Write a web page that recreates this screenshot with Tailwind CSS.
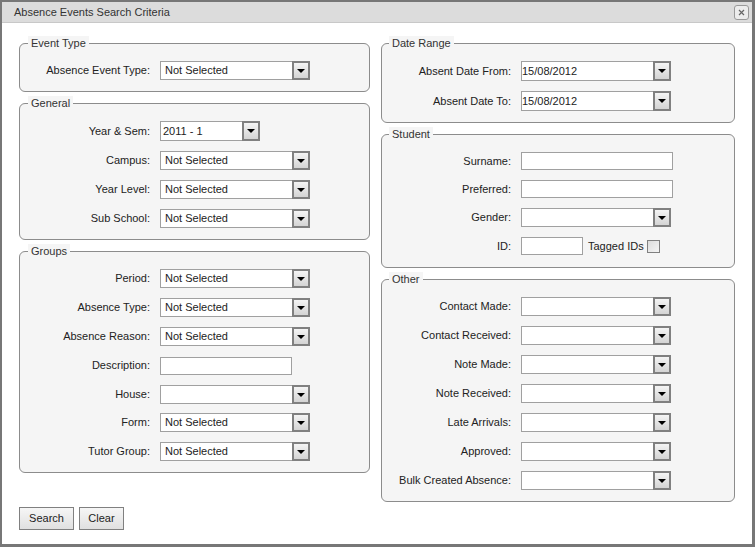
<!DOCTYPE html>
<html lang="en">
<head>
    <meta charset="UTF-8">
    <title>Absence Events Search Criteria</title>
    <script src="https://cdn.jsdelivr.net/npm/@tailwindcss/browser@4"></script>
</head>
<body class="m-0 bg-white font-['Liberation_Sans',Arial,sans-serif] text-[11px] text-[#222]">
    <div class="w-[755px] h-[547px] overflow-hidden bg-white border-l-2 border-r-[3px] border-t-2 border-b-[3px] border-[#777] flex flex-col">
        <!-- Title bar -->
        <div class="h-[21px] shrink-0 bg-[#dcdcdc] border-b border-[#c8c8c8] flex items-center justify-between pl-[12px] pr-[3px]">
            <span class="text-[#333]">Absence Events Search Criteria</span>
            <button class="w-[15px] h-[15px] rounded-[3px] border border-[#999] bg-[#ececec] flex items-center justify-center">
                <svg width="7" height="7" viewBox="0 0 7 7"><path d="M1 1L6 6M6 1L1 6" stroke="#666" stroke-width="1.2" fill="none"/></svg>
            </button>
        </div>

        <div class="flex-1 flex gap-[11px] pl-[17px] pt-[13px]">
            <!-- Left column -->
            <div class="w-[351px] flex flex-col gap-[4px]">
                <fieldset class="h-[56px] border border-[#8c8c8c] rounded-[6px] bg-[#f5f5f5] pl-[8px] pt-[11px]">
                    <legend class="px-[3px] bg-[#f5f5f5] text-[#333] leading-[14px]">Event Type</legend>
                    <div class="flex items-center h-[19px]">
                        <label class="w-[122px] text-right shrink-0">Absence Event Type:</label>
                        <div class="ml-[10px] w-[150px] h-[19px] border border-[#a0a0a0] bg-white flex items-center justify-between pl-[4px]">
                            <span>Not Selected</span>
                            <span class="w-[18px] h-[19px] -mr-px border-2 border-[#808080] bg-gradient-to-b from-[#f4f4f4] to-[#d4d4d4] flex items-center justify-center"><svg width="8" height="4" viewBox="0 0 8 4"><path d="M0 0H8L4 4Z" fill="#000"/></svg></span>
                        </div>
                    </div>
                </fieldset>

                <fieldset class="h-[144px] border border-[#8c8c8c] rounded-[6px] bg-[#f5f5f5] pl-[8px] pt-[11px]">
                    <legend class="px-[3px] bg-[#f5f5f5] text-[#333] leading-[14px]">General</legend>
                    <div class="flex flex-col gap-[10px]">
                        <div class="flex items-center h-[20px]">
                            <label class="w-[122px] text-right shrink-0">Year &amp; Sem:</label>
                            <div class="ml-[10px] w-[100px] h-[20px] border border-[#a0a0a0] bg-white flex items-center justify-between pl-[2px]">
                                <span>2011 - 1</span>
                                <span class="w-[18px] h-[20px] -mr-px border-2 border-[#808080] bg-gradient-to-b from-[#f4f4f4] to-[#d4d4d4] flex items-center justify-center"><svg width="8" height="4" viewBox="0 0 8 4"><path d="M0 0H8L4 4Z" fill="#000"/></svg></span>
                            </div>
                        </div>
                        <div class="flex items-center h-[19px]">
                            <label class="w-[122px] text-right shrink-0">Campus:</label>
                            <div class="ml-[10px] w-[150px] h-[19px] border border-[#a0a0a0] bg-white flex items-center justify-between pl-[4px]">
                                <span>Not Selected</span>
                                <span class="w-[18px] h-[19px] -mr-px border-2 border-[#808080] bg-gradient-to-b from-[#f4f4f4] to-[#d4d4d4] flex items-center justify-center"><svg width="8" height="4" viewBox="0 0 8 4"><path d="M0 0H8L4 4Z" fill="#000"/></svg></span>
                            </div>
                        </div>
                        <div class="flex items-center h-[19px]">
                            <label class="w-[122px] text-right shrink-0">Year Level:</label>
                            <div class="ml-[10px] w-[150px] h-[19px] border border-[#a0a0a0] bg-white flex items-center justify-between pl-[4px]">
                                <span>Not Selected</span>
                                <span class="w-[18px] h-[19px] -mr-px border-2 border-[#808080] bg-gradient-to-b from-[#f4f4f4] to-[#d4d4d4] flex items-center justify-center"><svg width="8" height="4" viewBox="0 0 8 4"><path d="M0 0H8L4 4Z" fill="#000"/></svg></span>
                            </div>
                        </div>
                        <div class="flex items-center h-[19px]">
                            <label class="w-[122px] text-right shrink-0">Sub School:</label>
                            <div class="ml-[10px] w-[150px] h-[19px] border border-[#a0a0a0] bg-white flex items-center justify-between pl-[4px]">
                                <span>Not Selected</span>
                                <span class="w-[18px] h-[19px] -mr-px border-2 border-[#808080] bg-gradient-to-b from-[#f4f4f4] to-[#d4d4d4] flex items-center justify-center"><svg width="8" height="4" viewBox="0 0 8 4"><path d="M0 0H8L4 4Z" fill="#000"/></svg></span>
                            </div>
                        </div>
                    </div>
                </fieldset>

                <fieldset class="h-[229px] border border-[#8c8c8c] rounded-[6px] bg-[#f5f5f5] pl-[8px] pt-[11px]">
                    <legend class="px-[3px] bg-[#f5f5f5] text-[#333] leading-[14px]">Groups</legend>
                    <div class="flex flex-col gap-[10px]">
                        <div class="flex items-center h-[19px]">
                            <label class="w-[122px] text-right shrink-0">Period:</label>
                            <div class="ml-[10px] w-[150px] h-[19px] border border-[#a0a0a0] bg-white flex items-center justify-between pl-[4px]">
                                <span>Not Selected</span>
                                <span class="w-[18px] h-[19px] -mr-px border-2 border-[#808080] bg-gradient-to-b from-[#f4f4f4] to-[#d4d4d4] flex items-center justify-center"><svg width="8" height="4" viewBox="0 0 8 4"><path d="M0 0H8L4 4Z" fill="#000"/></svg></span>
                            </div>
                        </div>
                        <div class="flex items-center h-[19px]">
                            <label class="w-[122px] text-right shrink-0">Absence Type:</label>
                            <div class="ml-[10px] w-[150px] h-[19px] border border-[#a0a0a0] bg-white flex items-center justify-between pl-[4px]">
                                <span>Not Selected</span>
                                <span class="w-[18px] h-[19px] -mr-px border-2 border-[#808080] bg-gradient-to-b from-[#f4f4f4] to-[#d4d4d4] flex items-center justify-center"><svg width="8" height="4" viewBox="0 0 8 4"><path d="M0 0H8L4 4Z" fill="#000"/></svg></span>
                            </div>
                        </div>
                        <div class="flex items-center h-[19px]">
                            <label class="w-[122px] text-right shrink-0">Absence Reason:</label>
                            <div class="ml-[10px] w-[150px] h-[19px] border border-[#a0a0a0] bg-white flex items-center justify-between pl-[4px]">
                                <span>Not Selected</span>
                                <span class="w-[18px] h-[19px] -mr-px border-2 border-[#808080] bg-gradient-to-b from-[#f4f4f4] to-[#d4d4d4] flex items-center justify-center"><svg width="8" height="4" viewBox="0 0 8 4"><path d="M0 0H8L4 4Z" fill="#000"/></svg></span>
                            </div>
                        </div>
                        <div class="flex items-center h-[19px]">
                            <label class="w-[122px] text-right shrink-0">Description:</label>
                            <div class="ml-[10px] w-[132px] h-[18px] border border-[#a0a0a0] bg-white"></div>
                        </div>
                        <div class="flex items-center h-[19px]">
                            <label class="w-[122px] text-right shrink-0">House:</label>
                            <div class="ml-[10px] w-[150px] h-[19px] border border-[#a0a0a0] bg-white flex items-center justify-end">
                                <span class="w-[18px] h-[19px] -mr-px border-2 border-[#808080] bg-gradient-to-b from-[#f4f4f4] to-[#d4d4d4] flex items-center justify-center"><svg width="8" height="4" viewBox="0 0 8 4"><path d="M0 0H8L4 4Z" fill="#000"/></svg></span>
                            </div>
                        </div>
                        <div class="flex items-center h-[19px] -mt-px">
                            <label class="w-[122px] text-right shrink-0">Form:</label>
                            <div class="ml-[10px] w-[150px] h-[19px] border border-[#a0a0a0] bg-white flex items-center justify-between pl-[4px]">
                                <span>Not Selected</span>
                                <span class="w-[18px] h-[19px] -mr-px border-2 border-[#808080] bg-gradient-to-b from-[#f4f4f4] to-[#d4d4d4] flex items-center justify-center"><svg width="8" height="4" viewBox="0 0 8 4"><path d="M0 0H8L4 4Z" fill="#000"/></svg></span>
                            </div>
                        </div>
                        <div class="flex items-center h-[19px]">
                            <label class="w-[122px] text-right shrink-0">Tutor Group:</label>
                            <div class="ml-[10px] w-[150px] h-[19px] border border-[#a0a0a0] bg-white flex items-center justify-between pl-[4px]">
                                <span>Not Selected</span>
                                <span class="w-[18px] h-[19px] -mr-px border-2 border-[#808080] bg-gradient-to-b from-[#f4f4f4] to-[#d4d4d4] flex items-center justify-center"><svg width="8" height="4" viewBox="0 0 8 4"><path d="M0 0H8L4 4Z" fill="#000"/></svg></span>
                            </div>
                        </div>
                    </div>
                </fieldset>

                <!-- Buttons -->
                <div class="flex gap-[5px] mt-[30px]">
                    <button class="w-[55px] h-[23px] border border-[#808080] bg-gradient-to-b from-[#f6f6f6] to-[#e0e0e0] text-[#222]">Search</button>
                    <button class="w-[45px] h-[23px] border border-[#808080] bg-gradient-to-b from-[#f6f6f6] to-[#e0e0e0] text-[#222]">Clear</button>
                </div>
            </div>

            <!-- Right column -->
            <div class="w-[354px] flex flex-col gap-[4px]">
                <fieldset class="h-[87px] border border-[#8c8c8c] rounded-[6px] bg-[#f5f5f5] pl-[8px] pt-[11px]">
                    <legend class="px-[3px] -ml-px bg-[#f5f5f5] text-[#333] leading-[14px]">Date Range</legend>
                    <div class="flex flex-col gap-[10px]">
                        <div class="flex items-center h-[20px]">
                            <label class="w-[121px] text-right shrink-0">Absent Date From:</label>
                            <div class="ml-[10px] w-[150px] h-[20px] border border-[#a0a0a0] bg-white flex items-center justify-between">
                                <span>15/08/2012</span>
                                <span class="w-[18px] h-[20px] -mr-px border-2 border-[#808080] bg-gradient-to-b from-[#f4f4f4] to-[#d4d4d4] flex items-center justify-center"><svg width="8" height="4" viewBox="0 0 8 4"><path d="M0 0H8L4 4Z" fill="#000"/></svg></span>
                            </div>
                        </div>
                        <div class="flex items-center h-[20px]">
                            <label class="w-[121px] text-right shrink-0">Absent Date To:</label>
                            <div class="ml-[10px] w-[150px] h-[20px] border border-[#a0a0a0] bg-white flex items-center justify-between">
                                <span>15/08/2012</span>
                                <span class="w-[18px] h-[20px] -mr-px border-2 border-[#808080] bg-gradient-to-b from-[#f4f4f4] to-[#d4d4d4] flex items-center justify-center"><svg width="8" height="4" viewBox="0 0 8 4"><path d="M0 0H8L4 4Z" fill="#000"/></svg></span>
                            </div>
                        </div>
                    </div>
                </fieldset>

                <fieldset class="h-[141px] border border-[#8c8c8c] rounded-[6px] bg-[#f5f5f5] pl-[8px] pt-[11px]">
                    <legend class="px-[3px] -ml-px bg-[#f5f5f5] text-[#333] leading-[14px]">Student</legend>
                    <div class="flex flex-col gap-[10px]">
                        <div class="flex items-center h-[18px]">
                            <label class="w-[121px] text-right shrink-0">Surname:</label>
                            <div class="ml-[10px] w-[152px] h-[18px] border border-[#a0a0a0] bg-white"></div>
                        </div>
                        <div class="flex items-center h-[18px]">
                            <label class="w-[121px] text-right shrink-0">Preferred:</label>
                            <div class="ml-[10px] w-[152px] h-[18px] border border-[#a0a0a0] bg-white"></div>
                        </div>
                        <div class="flex items-center h-[19px]">
                            <label class="w-[121px] text-right shrink-0">Gender:</label>
                            <div class="ml-[10px] w-[150px] h-[19px] border border-[#a0a0a0] bg-white flex items-center justify-end">
                                <span class="w-[18px] h-[19px] -mr-px border-2 border-[#808080] bg-gradient-to-b from-[#f4f4f4] to-[#d4d4d4] flex items-center justify-center"><svg width="8" height="4" viewBox="0 0 8 4"><path d="M0 0H8L4 4Z" fill="#000"/></svg></span>
                            </div>
                        </div>
                        <div class="flex items-center h-[18px]">
                            <label class="w-[121px] text-right shrink-0">ID:</label>
                            <div class="ml-[10px] w-[62px] h-[18px] border border-[#a0a0a0] bg-white"></div>
                            <span class="ml-[5px]">Tagged IDs</span>
                            <span class="ml-[3px] w-[13px] h-[13px] border border-[#808080] bg-gradient-to-br from-[#dcdcdc] to-[#f4f4f4]"></span>
                        </div>
                    </div>
                </fieldset>

                <fieldset class="h-[230px] border border-[#8c8c8c] rounded-[6px] bg-[#f5f5f5] pl-[8px] pt-[11px]">
                    <legend class="px-[3px] -ml-px bg-[#f5f5f5] text-[#333] leading-[14px]">Other</legend>
                    <div class="flex flex-col gap-[10px]">
                        <div class="flex items-center h-[19px]">
                            <label class="w-[121px] text-right shrink-0">Contact Made:</label>
                            <div class="ml-[10px] w-[150px] h-[19px] border border-[#a0a0a0] bg-white flex items-center justify-end">
                                <span class="w-[18px] h-[19px] -mr-px border-2 border-[#808080] bg-gradient-to-b from-[#f4f4f4] to-[#d4d4d4] flex items-center justify-center"><svg width="8" height="4" viewBox="0 0 8 4"><path d="M0 0H8L4 4Z" fill="#000"/></svg></span>
                            </div>
                        </div>
                        <div class="flex items-center h-[19px]">
                            <label class="w-[121px] text-right shrink-0">Contact Received:</label>
                            <div class="ml-[10px] w-[150px] h-[19px] border border-[#a0a0a0] bg-white flex items-center justify-end">
                                <span class="w-[18px] h-[19px] -mr-px border-2 border-[#808080] bg-gradient-to-b from-[#f4f4f4] to-[#d4d4d4] flex items-center justify-center"><svg width="8" height="4" viewBox="0 0 8 4"><path d="M0 0H8L4 4Z" fill="#000"/></svg></span>
                            </div>
                        </div>
                        <div class="flex items-center h-[19px]">
                            <label class="w-[121px] text-right shrink-0">Note Made:</label>
                            <div class="ml-[10px] w-[150px] h-[19px] border border-[#a0a0a0] bg-white flex items-center justify-end">
                                <span class="w-[18px] h-[19px] -mr-px border-2 border-[#808080] bg-gradient-to-b from-[#f4f4f4] to-[#d4d4d4] flex items-center justify-center"><svg width="8" height="4" viewBox="0 0 8 4"><path d="M0 0H8L4 4Z" fill="#000"/></svg></span>
                            </div>
                        </div>
                        <div class="flex items-center h-[19px]">
                            <label class="w-[121px] text-right shrink-0">Note Received:</label>
                            <div class="ml-[10px] w-[150px] h-[19px] border border-[#a0a0a0] bg-white flex items-center justify-end">
                                <span class="w-[18px] h-[19px] -mr-px border-2 border-[#808080] bg-gradient-to-b from-[#f4f4f4] to-[#d4d4d4] flex items-center justify-center"><svg width="8" height="4" viewBox="0 0 8 4"><path d="M0 0H8L4 4Z" fill="#000"/></svg></span>
                            </div>
                        </div>
                        <div class="flex items-center h-[19px]">
                            <label class="w-[121px] text-right shrink-0">Late Arrivals:</label>
                            <div class="ml-[10px] w-[150px] h-[19px] border border-[#a0a0a0] bg-white flex items-center justify-end">
                                <span class="w-[18px] h-[19px] -mr-px border-2 border-[#808080] bg-gradient-to-b from-[#f4f4f4] to-[#d4d4d4] flex items-center justify-center"><svg width="8" height="4" viewBox="0 0 8 4"><path d="M0 0H8L4 4Z" fill="#000"/></svg></span>
                            </div>
                        </div>
                        <div class="flex items-center h-[19px]">
                            <label class="w-[121px] text-right shrink-0">Approved:</label>
                            <div class="ml-[10px] w-[150px] h-[19px] border border-[#a0a0a0] bg-white flex items-center justify-end">
                                <span class="w-[18px] h-[19px] -mr-px border-2 border-[#808080] bg-gradient-to-b from-[#f4f4f4] to-[#d4d4d4] flex items-center justify-center"><svg width="8" height="4" viewBox="0 0 8 4"><path d="M0 0H8L4 4Z" fill="#000"/></svg></span>
                            </div>
                        </div>
                        <div class="flex items-center h-[19px]">
                            <label class="w-[121px] text-right shrink-0">Bulk Created Absence:</label>
                            <div class="ml-[10px] w-[150px] h-[19px] border border-[#a0a0a0] bg-white flex items-center justify-end">
                                <span class="w-[18px] h-[19px] -mr-px border-2 border-[#808080] bg-gradient-to-b from-[#f4f4f4] to-[#d4d4d4] flex items-center justify-center"><svg width="8" height="4" viewBox="0 0 8 4"><path d="M0 0H8L4 4Z" fill="#000"/></svg></span>
                            </div>
                        </div>
                    </div>
                </fieldset>
            </div>
        </div>
    </div>
</body>
</html>
